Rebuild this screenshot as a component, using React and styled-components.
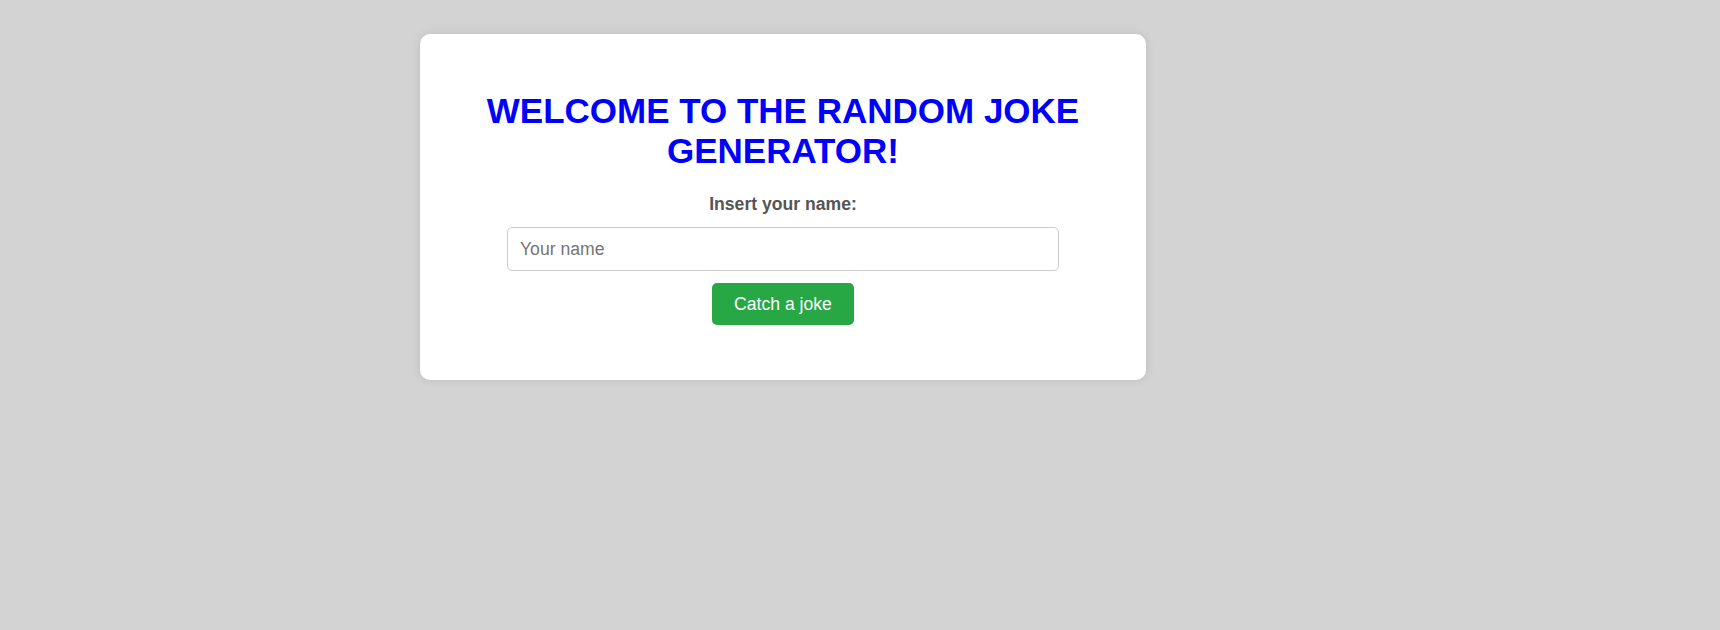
import React, { useState } from 'react';
import styled, { createGlobalStyle } from 'styled-components';

const GlobalStyle = createGlobalStyle`
  html, body {
    margin: 0;
    padding: 0;
    background-color: #d3d3d3;
    font-family: "Liberation Sans", Arial, sans-serif;
  }
`;

const Page = styled.div`
  min-height: 630px;
  padding-top: 34px;
  box-sizing: border-box;
`;

const Card = styled.div`
  width: 726px;
  box-sizing: border-box;
  margin-left: 420px;
  padding: 57px 40px 55px;
  background-color: white;
  border-radius: 10px;
  box-shadow: 0 0 10px rgba(0, 0, 0, 0.1);
  display: flex;
  flex-direction: column;
  align-items: center;
`;

const Title = styled.h1`
  margin: 0 0 23px;
  font-size: 35px;
  font-weight: bold;
  color: #0000ff;
  text-align: center;
  line-height: 40px;
`;

const Label = styled.label`
  font-size: 1.1rem;
  font-weight: bold;
  color: #555;
  margin-bottom: 12px;
`;

const NameInput = styled.input`
  width: 552px;
  height: 44px;
  box-sizing: border-box;
  padding: 0 12px;
  border: 1px solid #ccc;
  border-radius: 5px;
  font-family: inherit;
  font-size: 1.1rem;
  color: #333;
  outline: none;

  &::placeholder {
    color: #757575;
  }
`;

const Button = styled.button`
  margin-top: 12px;
  width: 142px;
  height: 42px;
  background-color: #28a745;
  color: white;
  border: none;
  border-radius: 5px;
  font-family: inherit;
  font-size: 1.1rem;
  cursor: pointer;

  &:hover {
    background-color: #218838;
  }
`;

const App = () => {
  const [name, setName] = useState('');

  return (
    <>
      <GlobalStyle />
      <Page>
        <Card>
          <Title>WELCOME TO THE RANDOM JOKE GENERATOR!</Title>
          <Label htmlFor="name">Insert your name:</Label>
          <NameInput
            id="name"
            type="text"
            placeholder="Your name"
            value={name}
            onChange={e => setName(e.target.value)}
          />
          <Button>Catch a joke</Button>
        </Card>
      </Page>
    </>
  );
};

export default App;
